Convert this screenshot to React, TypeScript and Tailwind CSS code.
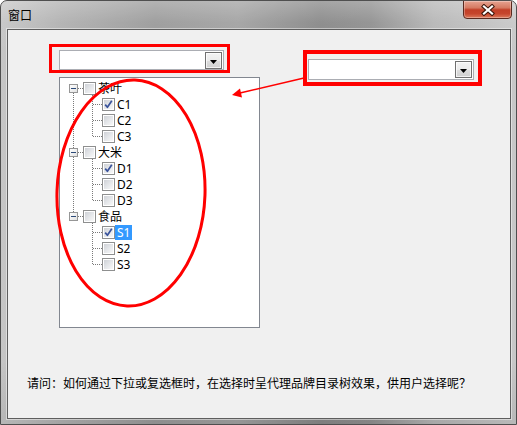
import React from "react";

type Item = { t: string; c?: boolean; sel?: boolean };
const groups: { name: string; items: Item[] }[] = [
  { name: "茶叶", items: [{ t: "C1", c: true }, { t: "C2" }, { t: "C3" }] },
  { name: "大米", items: [{ t: "D1", c: true }, { t: "D2" }, { t: "D3" }] },
  { name: "食品", items: [{ t: "S1", c: true, sel: true }, { t: "S2" }, { t: "S3" }] },
];

function CheckBox({ checked }: { checked?: boolean }) {
  return (
    <span className="relative flex h-[13px] w-[13px] shrink-0 border border-[#8e8f8f] bg-white p-px">
      <span className="block h-full w-full bg-[linear-gradient(135deg,#cfd2d7_0%,#e6e8eb_55%,#f8f8f8_100%)]" />
      {checked && (
        <svg className="absolute left-0 top-0" width="11" height="11" viewBox="0 0 11 11">
          <path d="M2.2 5.6 L4.4 8.3 L8.8 1.8" stroke="#3a539b" strokeWidth="1.7" fill="none" strokeLinejoin="round" />
        </svg>
      )}
    </span>
  );
}

function Expander() {
  return (
    <span className="relative flex h-[9px] w-[9px] shrink-0 items-center justify-center border border-[#969696] bg-[linear-gradient(135deg,#ffffff_0%,#e2e2e2_100%)]">
      <span className="block h-px w-[5px] bg-[#2c4a78]" />
    </span>
  );
}

function Combo({ className }: { className: string }) {
  return (
    <div className={className}>
      <div className="flex h-[17px] w-[17px] items-center justify-center border border-[#707070] bg-[linear-gradient(180deg,#f3f3f3_0%,#ebebeb_50%,#dddddd_51%,#cfcfcf_100%)] shadow-[inset_0_0_0_1px_rgba(255,255,255,0.7)]">
        <svg width="7" height="4" viewBox="0 0 7 4" className="mt-[2px]">
          <polygon points="0,0 7,0 3.5,4" fill="#000" />
        </svg>
      </div>
    </div>
  );
}

function TreeLines() {
  const els: React.ReactNode[] = [];
  els.push(<line key="rv1" x1="13.5" y1="15" x2="13.5" y2="70" />);
  els.push(<line key="rv2" x1="13.5" y1="79" x2="13.5" y2="134" />);
  for (let g = 0; g < 3; g++) {
    const o = g * 64;
    els.push(<line key={`rh${g}`} x1="18" y1={10.5 + o} x2="23" y2={10.5 + o} />);
    els.push(<line key={`cv${g}`} x1="32.5" y1={17 + o} x2="32.5" y2={59 + o} />);
    for (let i = 0; i < 3; i++) {
      const y = 26.5 + i * 16 + o;
      els.push(<line key={`ch${g}${i}`} x1="33" y1={y} x2="42" y2={y} />);
    }
  }
  return (
    <svg
      className="absolute left-0 top-0"
      width="199"
      height="249"
      stroke="#7a7a7a"
      strokeWidth="1"
      strokeDasharray="1 1"
      shapeRendering="crispEdges"
    >
      {els}
    </svg>
  );
}

function Tree() {
  return (
    <div className="relative mt-[7px] h-[251px] w-[201px] border border-[#828790] bg-white pt-[2px] font-['Noto_Sans','Noto_Sans_CJK_SC',sans-serif] text-[12px] text-black">
      <TreeLines />
      {groups.map((g) => (
        <React.Fragment key={g.name}>
          <div className="flex h-4 items-center pl-[9px]">
            <Expander />
            <span className="ml-[5px] flex">
              <CheckBox />
            </span>
            <span className="flex h-[15px] items-center px-[2px] leading-[15px]">{g.name}</span>
          </div>
          {g.items.map((it) => (
            <div key={it.t} className="flex h-4 items-center pl-[42px]">
              <CheckBox checked={it.c} />
              <span
                className={
                  it.sel
                    ? "flex h-[15px] items-center bg-[#3399ff] px-[2px] leading-[15px] text-white"
                    : "flex h-[15px] items-center px-[2px] leading-[15px]"
                }
              >
                {it.t}
              </span>
            </div>
          ))}
        </React.Fragment>
      ))}
    </div>
  );
}

export default function App() {
  return (
    <div className="relative flex h-[425px] w-[517px] flex-col overflow-hidden rounded-t-[7px] border border-[#4f4f4f] bg-[linear-gradient(90deg,#c6c6c6_0%,#b0b0b0_12%,#9a9a9a_30%,#a2a2a2_46%,#888888_62%,#909090_72%,#b6b6b6_84%,#c8c8c8_100%)] px-[5px] pb-[5px] pl-[6px]">
      <div className="pointer-events-none absolute inset-0 bg-[linear-gradient(180deg,rgba(255,255,255,0.25)_0%,rgba(255,255,255,0.06)_5%,rgba(255,255,255,0)_12%,rgba(0,0,0,0)_85%,rgba(0,0,0,0.08)_100%)]" />
      {/* title bar */}
      <div className="relative -ml-[6px] -mr-[5px] flex h-[28px] shrink-0 items-start">
        <span className="pl-[7px] pt-[6px] font-['Noto_Sans_CJK_SC',sans-serif] text-[12px] leading-[16px] text-black">
          窗口
        </span>
        <div className="ml-auto mr-[4px] -mt-px flex h-[19px] w-[49px] items-center justify-center rounded-b-[4px] border border-[#5a2a20] bg-[linear-gradient(180deg,#e6a391_0%,#d57a62_40%,#c23f27_52%,#c6452c_75%,#dc7a5c_100%)] shadow-[inset_0_0_0_1px_rgba(255,255,255,0.3)]">
          <svg width="14" height="12" viewBox="0 0 14 12">
            <path d="M3 2.5 L11 9.5 M11 2.5 L3 9.5" stroke="#3b1409" strokeWidth="4.2" strokeLinecap="square" />
            <path d="M3 2.5 L11 9.5 M11 2.5 L3 9.5" stroke="#ffffff" strokeWidth="2.2" strokeLinecap="square" />
          </svg>
        </div>
      </div>
      {/* client */}
      <div className="relative flex h-[390px] w-[504px] flex-col border border-[#5e5e5e] bg-[#f0f0f0] shadow-[0_0_0_1px_rgba(255,255,255,0.45)]">
        <div className="flex items-start">
          <div className="ml-[51px] mt-[20px] flex flex-col">
            <Combo className="flex h-[20px] w-[165px] items-start justify-end border border-[#abadb3] bg-white pr-px pt-px" />
            <Tree />
          </div>
          <Combo className="ml-[48px] mt-[29px] flex h-[21px] w-[166px] items-start justify-end border border-[#abadb3] bg-white pr-px pt-px" />
        </div>
        <p className="ml-[19px] mt-[47px] whitespace-nowrap font-['Noto_Sans_CJK_SC',sans-serif] text-[12px] leading-[16px] text-black">
          请问：如何通过下拉或复选框时，在选择时呈代理品牌目录树效果，供用户选择呢？
        </p>
      </div>

      {/* annotations */}
      <div className="pointer-events-none absolute left-[48px] top-[43px] h-[29px] w-[181px] border-[3px] border-[#ff0000]" />
      <div className="pointer-events-none absolute left-[302px] top-[49px] h-[36px] w-[179px] border-[4px] border-[#ff0000]" />
      <svg className="pointer-events-none absolute -left-px -top-px" width="517" height="425" viewBox="0 0 517 425">
        <ellipse
          cx="131"
          cy="193"
          rx="74"
          ry="113"
          fill="none"
          stroke="#ff0000"
          strokeWidth="3"
          transform="rotate(2 131 193)"
        />
        <line x1="304" y1="78" x2="240" y2="93" stroke="#ff0000" strokeWidth="1.6" />
        <polygon points="232,95 242,97.5 240,88.5" fill="#ff0000" />
      </svg>
    </div>
  );
}
